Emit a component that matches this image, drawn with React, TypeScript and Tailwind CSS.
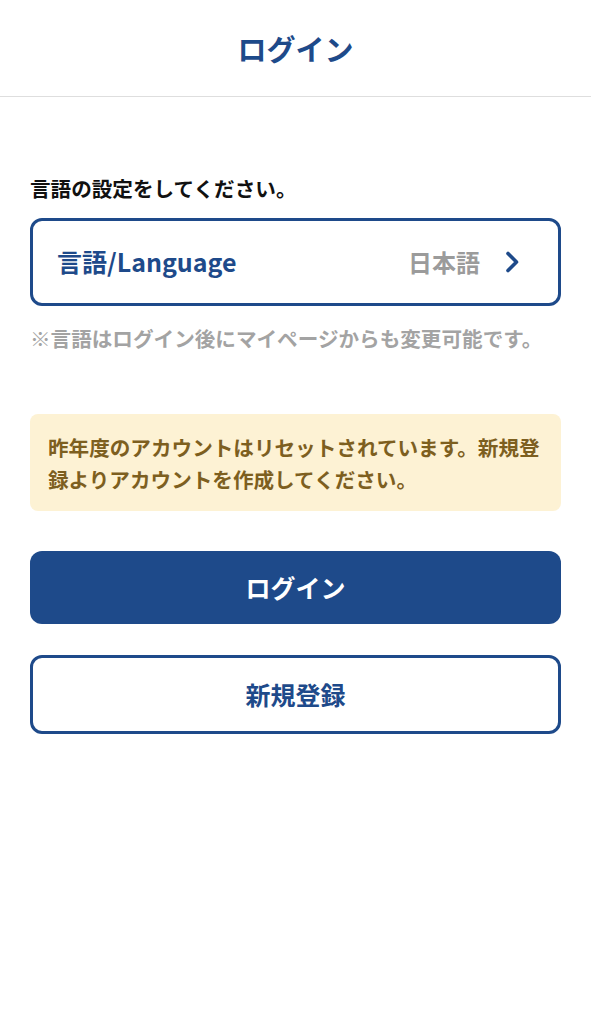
import React from "react";

const font = { fontFamily: '"Noto Sans CJK JP", "Noto Sans", sans-serif' };

export default function App() {
  return (
    <div className="min-h-[1024px] w-full bg-white" style={font}>
      <header className="flex h-[97px] items-center justify-center border-b border-[#dedede]">
        <h1 className="text-[29px] font-bold leading-none text-[#1e4a8a]">ログイン</h1>
      </header>
      <main className="flex flex-col px-[30px] pt-[77px]">
        <p className="text-[20.6px] font-bold leading-[28px] text-[#111]">言語の設定をしてください。</p>
        <button className="mt-[16px] flex h-[88px] items-center justify-between rounded-[12px] border-[3px] border-[#1e4a8a] bg-white pl-[24px] pr-[38px]">
          <span className="text-[25px] font-bold text-[#1e4a8a]">言語/Language</span>
          <span className="flex items-center gap-[25px]">
            <span className="text-[24px] font-bold text-[#9b9b9b]">日本語</span>
            <svg width="15" height="22" viewBox="0 0 15 22" fill="none">
              <path d="M3 2.5 L11.5 11 L3 19.5" stroke="#1e4a8a" strokeWidth="3.6" strokeLinecap="round" strokeLinejoin="round" />
            </svg>
          </span>
        </button>
        <p className="mt-[18px] text-[20.6px] font-bold leading-[28px] text-[#a3a3a3]">
          ※言語はログイン後にマイページからも変更可能です。
        </p>
        <div className="mt-[62px] rounded-[8px] bg-[#fdf2d4] px-[18px] pb-[16px] pt-[17px]">
          <p className="whitespace-nowrap text-[20.6px] font-bold leading-[32px] text-[#7d5f1f]">
            昨年度のアカウントはリセットされています。新規登
            <br />
            録よりアカウントを作成してください。
          </p>
        </div>
        <button className="mt-[40px] flex h-[73px] items-center justify-center rounded-[12px] bg-[#1e4a8a] text-[25px] font-bold text-white">
          ログイン
        </button>
        <button className="mt-[31px] flex h-[79px] items-center justify-center rounded-[12px] border-[3px] border-[#1e4a8a] bg-white text-[25px] font-bold text-[#1e4a8a]">
          新規登録
        </button>
      </main>
    </div>
  );
}
